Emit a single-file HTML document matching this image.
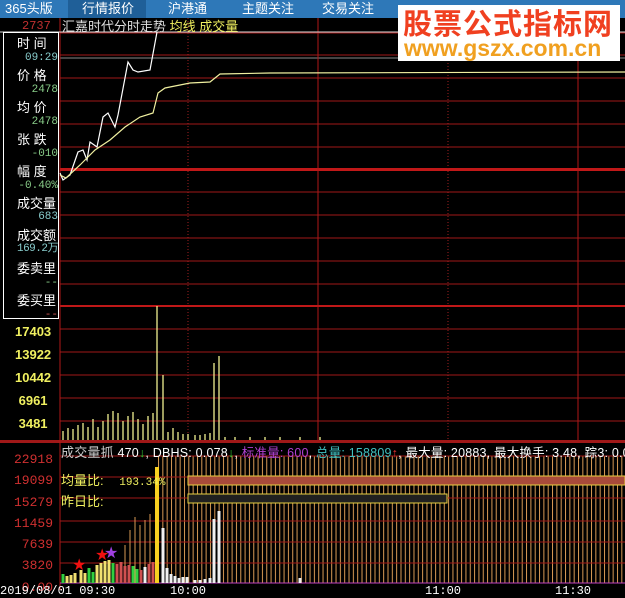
<!DOCTYPE html>
<html><head><meta charset="utf-8"><style>
*{margin:0;padding:0}
body{width:625px;height:590px;background:#000;overflow:hidden;position:relative;font-family:"Liberation Sans","Noto Sans CJK SC",sans-serif}
.tab{position:absolute;top:0;height:18px;line-height:17px;color:#fff;font-size:13px}
.lab{position:absolute;font-family:"Liberation Mono","Noto Sans CJK SC",monospace;font-size:11px;right:0;white-space:nowrap}
</style></head><body>
<div style="position:absolute;left:0;top:0;width:625px;height:18px;background:#2e78b8"></div>
<div style="position:absolute;left:68px;top:0;width:78px;height:18px;background:#1f5f98"></div>
<div class="tab" style="left:5px">365头版</div>
<div class="tab" style="left:82px">行情报价</div>
<div class="tab" style="left:168px">沪港通</div>
<div class="tab" style="left:242px">主题关注</div>
<div class="tab" style="left:322px">交易关注</div>

<svg style="position:absolute;left:0;top:0" width="625" height="590">
<defs>
<pattern id="vl" x="158" y="0" width="4.33" height="10" patternUnits="userSpaceOnUse"><rect x="0" y="0" width="1" height="10" fill="#d89a55"/></pattern>
</defs>
<g stroke="#a01818" stroke-width="1">
<line x1="60" y1="33" x2="625" y2="33"/>
<line x1="60" y1="55" x2="625" y2="55"/>
<line x1="60" y1="78" x2="625" y2="78"/>
<line x1="60" y1="101" x2="625" y2="101"/>
<line x1="60" y1="124" x2="625" y2="124"/>
<line x1="60" y1="147" x2="625" y2="147"/>
<line x1="60" y1="192" x2="625" y2="192"/>
<line x1="60" y1="215" x2="625" y2="215"/>
<line x1="60" y1="238" x2="625" y2="238"/>
<line x1="60" y1="261" x2="625" y2="261"/>
<line x1="60" y1="284" x2="625" y2="284"/>
<line x1="60" y1="329" x2="625" y2="329"/>
<line x1="60" y1="352" x2="625" y2="352"/>
<line x1="60" y1="375" x2="625" y2="375"/>
<line x1="60" y1="398" x2="625" y2="398"/>
<line x1="60" y1="421" x2="625" y2="421"/>
</g>
<line x1="60" y1="58" x2="625" y2="58" stroke="#888"/>
<rect x="60" y="168" width="565" height="3" fill="#c01818"/>
<rect x="60" y="305" width="565" height="2" fill="#c01818"/>
<rect x="0" y="440" width="625" height="3" fill="#a01818"/>
<g stroke="#b01818"><line x1="60" y1="18" x2="60" y2="590"/><line x1="318" y1="18" x2="318" y2="440"/><line x1="578" y1="18" x2="578" y2="440"/></g>
<g stroke="#a02020" stroke-dasharray="1,2"><line x1="188" y1="18" x2="188" y2="440"/><line x1="448" y1="18" x2="448" y2="440"/></g>
<line x1="0" y1="32" x2="625" y2="32" stroke="#ddd"/>
<polyline fill="none" stroke="#fff" stroke-width="1.2" points="60,173 63,180 70,175 78,152 83,150 87,160 90,142 97,147 103,117 108,113 115,127 118,115 128,62 133,70 138,72 150,70 157,32"/>
<polyline fill="none" stroke="#f0f0a0" stroke-width="1.2" points="60,175 66,178 80,165 95,150 110,140 125,127 140,117 153,113 158,93 165,88 190,83 210,82 220,74 270,73 625,72"/>
<g stroke="#f0f090" stroke-width="1.3">
<path d="M63 440V431M68 440V428M73 440V429M78 440V425M83 440V423M88 440V427M93 440V419M98 440V427M103 440V421M108 440V414M113 440V411M118 440V413M123 440V421M128 440V416M133 440V412M138 440V419M143 440V424M148 440V416M153 440V413M157 440V306M163 440V375M168 440V432M173 440V428M178 440V432M183 440V434M188 440V434M195 440V435M200 440V435M205 440V434M210 440V433M214 440V363M219 440V356M225 440V437M235 440V437M250 440V437M265 440V437M280 440V437M300 440V437M320 440V437"/>
</g>
<rect x="158" y="456" width="467" height="127" fill="url(#vl)"/>
<g stroke="#a01818"><line x1="60" y1="456" x2="625" y2="456"/><line x1="60" y1="477" x2="625" y2="477"/><line x1="60" y1="498" x2="625" y2="498"/><line x1="60" y1="521" x2="625" y2="521"/><line x1="60" y1="542" x2="625" y2="542"/><line x1="60" y1="563" x2="625" y2="563"/></g>
<line x1="60" y1="583" x2="625" y2="583" stroke="#c040c0"/>
<g stroke="#d89a55"><path d="M125 583V545M130 583V530M135 583V517M140 583V525M145 583V520M150 583V514"/></g>
<rect x="188" y="476" width="437" height="9" fill="#a84a3a" stroke="#e8d040"/>
<rect x="188" y="494" width="259" height="9" fill="#202020" stroke="#e8d040"/>
<g stroke-width="3">
<path stroke="#30d040" d="M63 583V574M89 583V568M93 583V572M113 583V563M133 583V566M137 583V569"/>
<path stroke="#f0e070" d="M67 583V576M71 583V575M75 583V573M81 583V570M85 583V573M97 583V565M101 583V563M105 583V561M109 583V560"/>
<path stroke="#d05050" d="M117 583V564M121 583V562M125 583V566M129 583V565M141 583V570M149 583V564M153 583V562"/>
<path stroke="#f0f0f0" d="M145 583V567M163 583V528M167 583V568M171 583V574M175 583V576M179 583V578M183 583V577M187 583V577M195 583V580M200 583V580M205 583V579M210 583V578M214 583V519M219 583V511M300 583V578"/>
</g>
<rect x="155" y="467" width="4" height="116" fill="#f8d020"/>
<g font-size="16" font-family="DejaVu Sans"><text x="72" y="570" fill="#f01010">★</text><text x="95" y="560" fill="#f01010">★</text><text x="104" y="558" fill="#a040e0">★</text></g>
</svg>

<div style="position:absolute;left:22px;top:19px;color:#c03030;font-size:12px;font-family:'Liberation Mono'">2737</div>
<div style="position:absolute;left:3px;top:32px;width:54px;height:285px;border:1px solid #fff;background:#000;font-size:13px;color:#fff;line-height:15px">
<div style="position:absolute;left:13px;top:3px">时 间</div>
<div class="lab" style="top:18px;color:#8cc">09:29</div>
<div style="position:absolute;left:13px;top:35px">价 格</div>
<div class="lab" style="top:50px;color:#8c8">2478</div>
<div style="position:absolute;left:13px;top:67px">均 价</div>
<div class="lab" style="top:82px;color:#8c8">2478</div>
<div style="position:absolute;left:13px;top:99px">张 跌</div>
<div class="lab" style="top:114px;color:#8c8">-010</div>
<div style="position:absolute;left:13px;top:131px">幅 度</div>
<div class="lab" style="top:146px;color:#8c8">-0.40%</div>
<div style="position:absolute;left:13px;top:163px">成交量</div>
<div class="lab" style="top:177px;color:#8cc">683</div>
<div style="position:absolute;left:13px;top:195px">成交额</div>
<div class="lab" style="top:209px;color:#8cc;letter-spacing:-0.5px">169.2万</div>
<div style="position:absolute;left:13px;top:228px">委卖里</div>
<div class="lab" style="top:243px;color:#8c8">--</div>
<div style="position:absolute;left:13px;top:260px">委买里</div>
<div class="lab" style="top:275px;color:#c55">--</div>
</div>
<div style="position:absolute;font:bold 13px 'Liberation Sans';color:#f0f060;left:15px;top:320px;line-height:23px">17403<br>13922<br>10442<br>&nbsp;6961<br>&nbsp;3481</div>
<div style="position:absolute;font:13px 'Liberation Mono',monospace;color:#d03030;left:14px;top:449px;line-height:21.3px">22918<br>19099<br>15279<br>11459<br>&nbsp;7639<br>&nbsp;3820<br>&nbsp;0.00</div>

<div style="position:absolute;left:62px;top:16px;font-size:13px;color:#ddd">汇嘉时代分时走势 <span style="color:#f0f060">均线 成交量</span></div>
<div style="position:absolute;left:61px;top:442px;font-size:12.5px;color:#fff;white-space:nowrap;letter-spacing:0.2px"><span style="color:#ccc;font-size:13px">成交量抓</span> 470<span style="color:#3c3">↓</span>, DBHS: 0.078<span style="color:#3c3">↓</span>, <span style="color:#b040d0">标准量: 600</span>, <span style="color:#40c0c0">总量: 158809</span><span style="color:#e33">↑</span>, 最大量: 20883, 最大换手: 3.48, 踪3: 0.0</div>
<div style="position:absolute;left:61px;top:470px;font-size:13px;color:#f0f060">均量比: <span style="font-family:'Liberation Mono';font-size:11px;margin-left:12px">193.34%</span></div>
<div style="position:absolute;left:61px;top:491px;font-size:13px;color:#f0f060">昨日比:</div>
<div style="position:absolute;left:0;top:584px;font:12px 'Liberation Mono';color:#fff;white-space:nowrap">2019/08/01 09:30<span style="position:absolute;left:170px">10:00</span><span style="position:absolute;left:425px">11:00</span><span style="position:absolute;left:555px">11:30</span></div>

<div style="position:absolute;left:398px;top:5px;width:222px;height:56px;background:#fff"></div>
<div style="position:absolute;left:403px;top:4px;font:bold 29px 'Noto Sans CJK SC',sans-serif;color:#f04020;letter-spacing:1px;line-height:36px">股票公式指标网</div>
<div style="position:absolute;left:404px;top:35px;font:bold 23px 'Liberation Sans',sans-serif;color:#f0a020;line-height:26px">www.gszx.com.cn</div>
</body></html>
